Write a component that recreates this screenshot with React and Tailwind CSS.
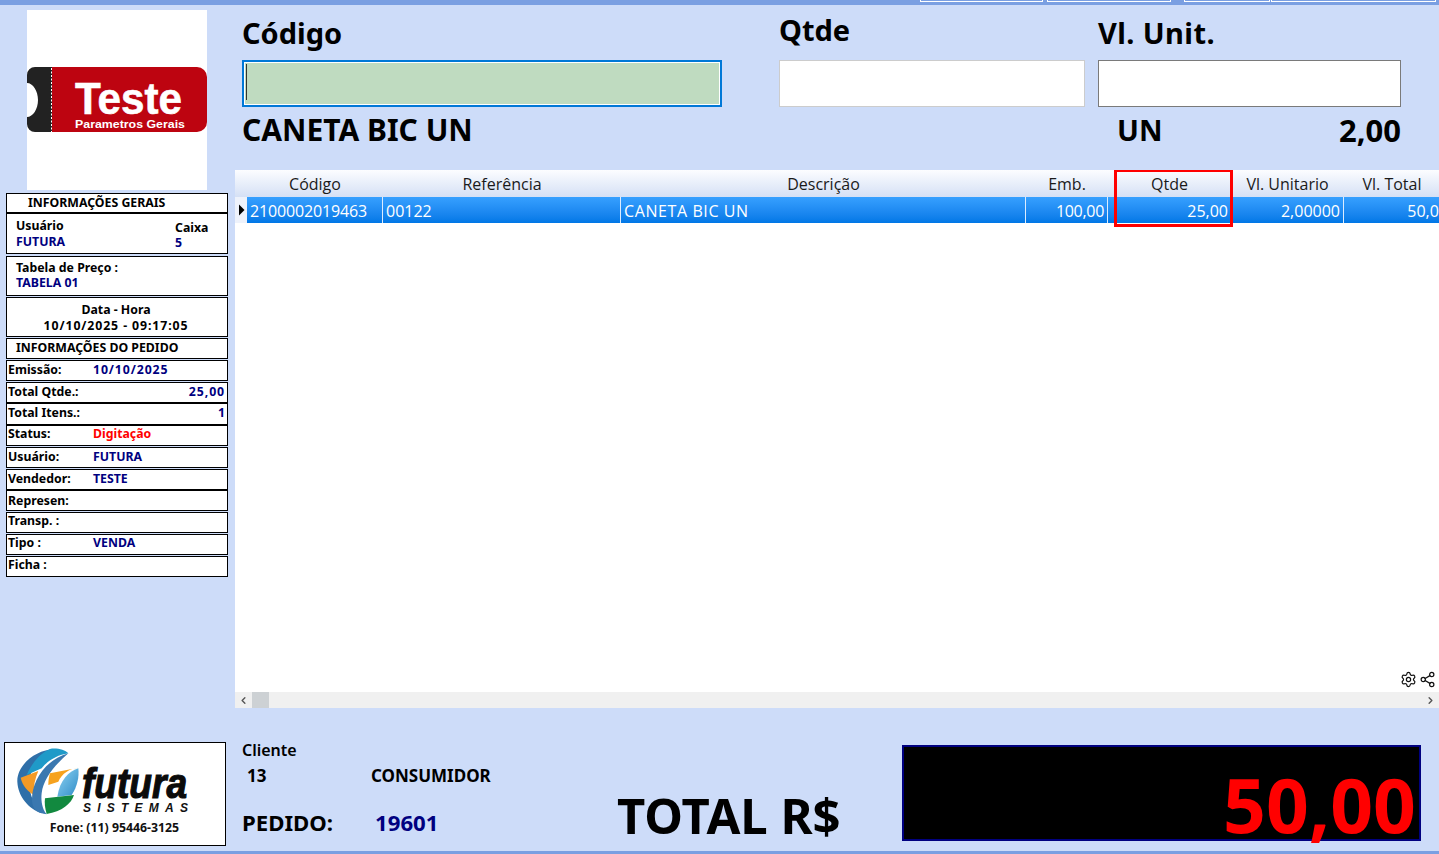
import React from "react";
import { Settings, Share2, ChevronLeft, ChevronRight } from "lucide-react";

const noto = "font-['Noto_Sans',sans-serif]";
const num = "tracking-[0.9px]";

function Box({ h, mt = 0, className = "", children }) {
  return (
    <div
      className={`w-[222px] shrink-0 border border-black bg-white text-[12.3px] leading-[15px] font-bold text-black overflow-hidden ${className}`}
      style={{ height: h, marginTop: mt }}
    >
      {children}
    </div>
  );
}

function Row({ label, value, color = "text-[#000080]", right, h, mt, top = 1, valueClass = "" }) {
  return (
    <Box h={h} mt={mt}>
      <div className="flex pl-[1px] pr-[2px]" style={{ paddingTop: top }}>
        <span className="w-[85px] shrink-0 whitespace-nowrap">{label}</span>
        <span className={`flex-1 whitespace-nowrap ${color} ${valueClass} ${right ? "text-right" : ""}`}>{value}</span>
      </div>
    </Box>
  );
}

function Sidebar() {
  return (
    <aside className="w-[235px] shrink-0 flex flex-col pl-[6px] pt-[5px]">
      <div className="w-[180px] h-[180px] ml-[21px] bg-white flex items-center shrink-0">
        <svg width="180" height="66" viewBox="0 0 180 66" className="block">
          <path d="M25 0H170a10 10 0 0 1 10 10V55a10 10 0 0 1-10 10H25Z" fill="#bd0410" />
          <path d="M8 0H25V65H8a8 8 0 0 1-8-8V50C6 50 11 42 11 33S6 16 0 16V8a8 8 0 0 1 8-8Z" fill="#222222" />
          <line x1="24.5" y1="1" x2="24.5" y2="65" stroke="#ffffff" strokeWidth="1" strokeDasharray="2 1.5" />
          <text x="48" y="47" fill="#fff" stroke="#fff" strokeWidth="0.6" fontFamily="Liberation Sans, sans-serif" fontWeight="700" fontSize="44" textLength="107" lengthAdjust="spacingAndGlyphs">Teste</text>
          <text x="48" y="61" fill="#fff" fontFamily="Liberation Sans, sans-serif" fontWeight="700" fontSize="11.5" textLength="110" lengthAdjust="spacingAndGlyphs">Parametros Gerais</text>
        </svg>
      </div>
      <div className={`flex flex-col mt-[3px] ${noto}`}>
        <Box h={21} className="border-b-2 text-[#000080] pl-[21px] pt-[1px]">INFORMAÇÕES GERAIS</Box>
        <Box h={41} mt={-1} className="pl-[9px] flex">
          <div className="w-[159px] pt-[4px]"><div>Usuário</div><div className="text-[#000080] mt-[1px]">FUTURA</div></div>
          <div className="pt-[6px]"><div>Caixa</div><div className="text-[#000080]">5</div></div>
        </Box>
        <Box h={40} mt={2} className="pl-[9px] pt-[3px]">
          <div>Tabela de Preço :</div>
          <div className="text-[#000080]">TABELA 01</div>
        </Box>
        <Box h={40} mt={1} className="text-center pt-[4px] pr-[2px]">
          <div>Data - Hora</div>
          <div className={`mt-[1px] ${num}`}>10/10/2025 - 09:17:05</div>
        </Box>
        <Box h={21} mt={1} className="pl-[9px] pt-[1px]">INFORMAÇÕES DO PEDIDO</Box>
        <Row h={21} mt={1} label="Emissão:" value="10/10/2025" valueClass={num} />
        <Row h={21} mt={1} label="Total Qtde.:" value="25,00" right top={1} valueClass={num} />
        <Row h={22} mt={0} label="Total Itens.:" value="1" right top={1} />
        <Row h={21} mt={0} label="Status:" value="Digitação" color="text-[#ff0000]" top={0} />
        <Row h={21} mt={1} label="Usuário:" value="FUTURA" top={1} />
        <Row h={21} mt={1} label="Vendedor:" value="TESTE" top={1} />
        <Row h={21} mt={0} label="Represen:" value="" top={2} />
        <Row h={21} mt={1} label="Transp. :" value="" top={0} />
        <Row h={21} mt={1} label="Tipo :" value="VENDA" top={-1} />
        <Row h={21} mt={1} label="Ficha :" value="" top={-1} />
      </div>
    </aside>
  );
}

const headCols = ["w-[136px]", "w-[238px]", "w-[405px]", "w-[82px]", "w-[123px]", "w-[113px]", "w-[96px]"];
const rowCols = ["w-[136px]", "w-[238px]", "w-[405px]", "w-[82px]", "w-[123px]", "w-[113px]", "w-[108px]"];

function Field({ label, className, inputClass, labelClass = "", children }) {
  return (
    <div className={`flex flex-col shrink-0 ${className}`}>
      <div className={`h-[45px] text-[29px] leading-[36px] font-bold text-black whitespace-nowrap ${labelClass}`}>{label}</div>
      <div className={`h-[47px] ${inputClass}`}>{children}</div>
    </div>
  );
}

function Grid() {
  const head = ["Código", "Referência", "Descrição", "Emb.", "Qtde", "Vl. Unitario", "Vl. Total"];
  const row = [
    ["2100002019463", "text-left pl-[3px] tracking-[-0.15px]"],
    ["00122", "text-left pl-[3px]"],
    ["CANETA BIC UN", "text-left pl-[3px] tracking-[0.6px]"],
    ["100,00", "text-right pr-[3px] tracking-[-0.3px]"],
    ["25,00", "text-right pr-[2px]"],
    ["2,00000", "text-right pr-[3px]"],
    ["50,00", "text-right pr-[3px]"],
  ];
  return (
    <div className="relative h-[538px] mt-[17px] bg-white flex flex-col overflow-hidden font-['Open_Sans',sans-serif]">
      <div className="flex h-[27px] shrink-0 pt-[2px] bg-gradient-to-b from-[#fcfdff] to-[#d5e0f5] text-[16px] leading-[25px] text-[#1a1a1a]">
        <div className="w-[12px] shrink-0" />
        {head.map((t, i) => (
          <div key={t} className={`${headCols[i]} shrink-0 text-center whitespace-nowrap`}>{t}</div>
        ))}
      </div>
      <div className="flex h-[26px] shrink-0">
        <div className="w-[12px] shrink-0 bg-[#eef2fb] flex items-center justify-center">
          <svg width="7" height="12" viewBox="0 0 7 12" className="block"><path d="M1 0.5 6.5 6 1 11.5Z" fill="#000" /></svg>
        </div>
        <div className="flex flex-1 bg-gradient-to-b from-[#36a0ff] to-[#0077e6] text-white text-[16px] leading-[24px]">
          {row.map(([t, c], i) => (
            <div key={i} className={`${rowCols[i]} shrink-0 pt-[2px] whitespace-nowrap border-r border-[#dcecff] ${c}`}>{t}</div>
          ))}
        </div>
      </div>
      <div className="flex-1 flex items-end justify-end pr-[3px] pb-[4px] gap-[2px]">
        <Settings size={17} strokeWidth={1.7} color="#111" />
        <Share2 size={17} strokeWidth={1.7} color="#111" />
      </div>
      <div className="h-[16px] shrink-0 bg-[#f0f0f0] flex items-center text-[#555]">
        <div className="w-[17px] flex justify-center shrink-0"><ChevronLeft size={11} strokeWidth={3} /></div>
        <div className="w-[17px] h-[16px] bg-[#cdd1d4] shrink-0" />
        <div className="flex-1" />
        <div className="w-[17px] flex justify-center shrink-0"><ChevronRight size={11} strokeWidth={3} /></div>
      </div>
      <div className="absolute left-[879px] top-[-1px] w-[119px] h-[58px] border-[3px] border-[#ff0000]" />
    </div>
  );
}

function FuturaLogo() {
  return (
    <svg width="220" height="72" viewBox="0 0 220 72" className="block">
      <defs>
        <linearGradient id="ribbon" x1="0" y1="0" x2="1" y2="1">
          <stop offset="0" stopColor="#8fd4f2" />
          <stop offset="1" stopColor="#2f8cc8" />
        </linearGradient>
      </defs>
      <g transform="translate(-5,-8) scale(0.3333)">
        <path d="M165 42C100 45 50 95 52 140C54 185 85 220 125 235C100 205 82 170 90 125C98 90 125 60 165 42Z" fill="#2f6fa8" />
        <path d="M150 42C170 38 195 45 205 55C170 60 140 80 125 100L80 120C95 85 120 55 150 42Z" fill="#1f9ac8" />
        <path d="M62 128L115 108C105 130 100 155 102 180C85 170 68 155 62 128Z" fill="#f39a26" />
        <path d="M205 55C165 90 130 130 125 175C122 200 128 225 140 238C115 235 100 225 97 205C90 160 120 80 205 55Z" fill="#3a78b0" />
        <path d="M150 115L235 98C210 100 185 115 175 140L145 150C145 135 147 125 150 115Z" fill="#f6a21e" />
        <path d="M235 100C205 110 180 135 172 185L215 180C232 155 238 125 235 100Z" fill="url(#ribbon)" />
        <path d="M135 190L222 180C215 205 185 230 140 237C135 220 133 205 135 190Z" fill="#12893f" />
      </g>
      <text x="77" y="55" fontFamily="Liberation Sans, sans-serif" fontStyle="italic" fontWeight="700" fontSize="42" fill="#0b0b0b" stroke="#0b0b0b" strokeWidth="1.2" textLength="105" lengthAdjust="spacingAndGlyphs">futura</text>
      <text x="78" y="69" fontFamily="Liberation Sans, sans-serif" fontStyle="italic" fontWeight="700" fontSize="12" fill="#111" textLength="105">SISTEMAS</text>
    </svg>
  );
}

export default function App() {
  return (
    <div className={`w-[1439px] h-[854px] bg-[#cddcf9] flex flex-col overflow-hidden ${noto}`}>
      <div className="h-[5px] shrink-0 bg-[#7a9fe2] flex justify-end pr-[3px]">
        <div className="w-[123px] h-[2px] border border-t-0 border-white" />
        <div className="w-[124px] h-[2px] border border-t-0 border-white ml-[4px]" />
        <div className="w-[86px] h-[2px] border border-t-0 border-white ml-[13px]" />
        <div className="w-[165px] h-[2px] border border-t-0 border-white ml-[1px]" />
      </div>
      <div className="flex h-[703px] shrink-0">
        <Sidebar />
        <main className="flex-1 min-w-0 flex flex-col">
          <div className="flex pl-[7px] pt-[10px]">
            <Field label="Código" className="w-[480px]" inputClass="border-2 border-[#0078d7] bg-[#bfdbc0] p-0">
              <div className="h-full border border-white pl-[1px] pt-[1px] pb-[5px]"><div className="w-[1px] h-[36px] bg-[#333]" /></div>
            </Field>
            <Field label="Qtde" className="w-[306px] ml-[57px]" labelClass="-mt-[3px] !h-[48px]" inputClass="border border-[#cccccc] bg-white" />
            <Field label="Vl. Unit." className="w-[303px] ml-[13px]" labelClass="tracking-[0.4px]" inputClass="border border-[#7a7a7a] bg-white" />
          </div>
          <div className="flex pl-[7px] h-[46px] text-[30px] leading-[46px] font-bold text-black">
            <div className="w-[875px]">CANETA BIC UN</div>
            <div className="w-[140px] text-[29px]">UN</div>
            <div className="w-[144px] text-right text-[31px]">2,00</div>
          </div>
          <Grid />
        </main>
      </div>
      <div className="flex flex-1 min-h-0">
        <div className="w-[242px] shrink-0 pl-[4px] pt-[34px]">
          <div className="w-[222px] h-[104px] bg-white border border-black flex flex-col items-center">
            <FuturaLogo />
            <div className="text-[12.3px] leading-[14px] font-bold text-[#111] mt-[6px] -ml-[1px]">Fone: (11) 95446-3125</div>
          </div>
        </div>
        <div className="w-[375px] shrink-0 pt-[31px] font-bold text-black">
          <div className="text-[16px] leading-[22px] font-semibold">Cliente</div>
          <div className="flex text-[17px] leading-[22px] mt-[4px] pl-[5px]">
            <span className="w-[124px]">13</span><span>CONSUMIDOR</span>
          </div>
          <div className="flex items-baseline text-[22.2px] leading-[30px] font-bold mt-[21px]">
            <span className="w-[133px]">PEDIDO:</span><span className="text-[#000080]">19601</span>
          </div>
        </div>
        <div className="w-[285px] shrink-0 pt-[76px] text-[49px] leading-[62px] font-bold text-black whitespace-nowrap">TOTAL R$</div>
        <div className="pt-[37px]">
          <div className="w-[519px] h-[96px] bg-black border-2 border-[#000080] flex items-end justify-end pr-[3px]">
            <span className="text-[75px] leading-[70px] font-bold text-[#ff0000] whitespace-nowrap">50,00</span>
          </div>
        </div>
      </div>
      <div className="h-[3px] shrink-0 bg-[#7a9fe2]" />
    </div>
  );
}
